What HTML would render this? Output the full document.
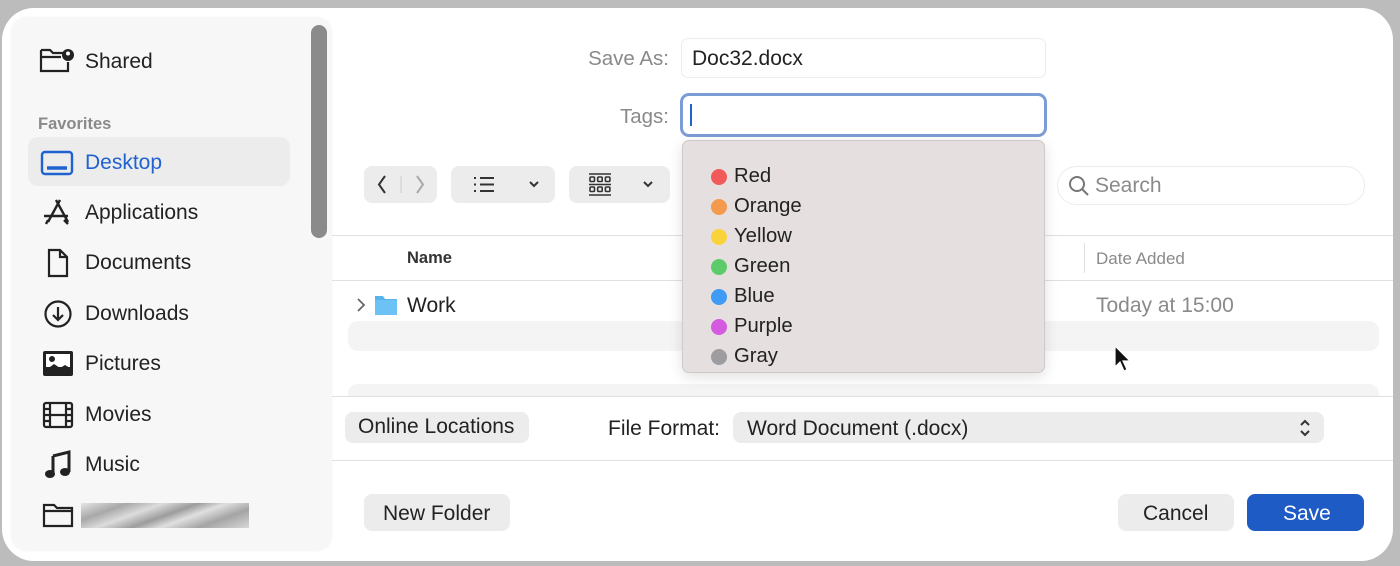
<!DOCTYPE html>
<html><head><meta charset="utf-8"><style>
*{margin:0;padding:0;box-sizing:border-box}
body{width:1400px;height:566px;overflow:hidden;background:#bcbcbc;font-family:"Liberation Sans",sans-serif;position:relative;color:#222}
.a{position:absolute}
.dlg{left:2px;top:8px;width:1391px;height:553px;background:#fff;border-radius:32px}
.side{left:12px;top:18px;width:319px;height:532px;background:#f7f7f7;border-radius:14px;box-shadow:0 0 3px rgba(0,0,0,.08)}
.si{font-size:21.5px;color:#222;left:85px}
.ic{left:40px}
.lbl{font-size:20.5px;color:#8a8a8a;text-align:right}
.btn{background:#ececec;border-radius:8px}
.t{font-size:21px;white-space:nowrap}
.d{font-size:20.3px}
.dot{width:16px;height:16px;border-radius:50%;left:711px}
.line{height:1px;background:#e0e0e0}
</style></head><body>
<div class="a dlg"></div>
<div class="a side"></div>
<div class="a" style="left:311px;top:25px;width:16px;height:213px;background:#8b8b8b;border-radius:8px"></div>
<div class="a" style="left:28px;top:137px;width:262px;height:49px;background:#ececec;border-radius:10px"></div>

<!-- sidebar icons -->
<svg class="a" style="left:38px;top:46px" width="40" height="30" viewBox="0 0 40 30" fill="none" stroke="#222" stroke-width="2.2"><path d="M3 4h9l3 3h10M3 4v21h27v-9M3 11h20"/><circle cx="30" cy="9" r="6" fill="#222" stroke="none"/><circle cx="30" cy="7.5" r="2" fill="#fff" stroke="none"/></svg>
<div class="a si t" style="top:50px">Shared</div>
<div class="a" style="left:38px;top:115px;font-size:16.5px;font-weight:bold;color:#8a8a8a">Favorites</div>
<svg class="a" style="left:40px;top:150px" width="34" height="26" viewBox="0 0 34 26" fill="none" stroke="#1f62d0" stroke-width="2.4"><rect x="2" y="2" width="30" height="22" rx="3"/><path d="M7 18h20" stroke-width="3.5"/></svg>
<div class="a si t" style="top:151px;color:#1f62d0">Desktop</div>
<svg class="a" style="left:42px;top:198px" width="32" height="28" viewBox="0 0 32 28" fill="none" stroke="#222" stroke-width="2.4"><path d="M14 2l12 22M18 2L6 24M2 18h24M22 22l4 4M4 26l2-4"/></svg>
<div class="a si t" style="top:201px">Applications</div>
<svg class="a" style="left:46px;top:248px" width="24" height="30" viewBox="0 0 24 30" fill="none" stroke="#222" stroke-width="2.2"><path d="M3 2h11l7 7v19H3zM14 2v7h7"/></svg>
<div class="a si t" style="top:251px">Documents</div>
<svg class="a" style="left:43px;top:299px" width="30" height="30" viewBox="0 0 30 30" fill="none" stroke="#222" stroke-width="2.2"><circle cx="15" cy="15" r="12.5"/><path d="M15 8v13M10 16l5 5 5-5"/></svg>
<div class="a si t" style="top:302px">Downloads</div>
<svg class="a" style="left:42px;top:350px" width="32" height="28" viewBox="0 0 32 28"><rect x="1" y="1" width="30" height="25" rx="2" fill="#222"/><rect x="4" y="4" width="24" height="13" fill="#fff"/><circle cx="10" cy="9" r="3" fill="#222"/><path d="M4 20l8-6 6 4 5-3 5 3v6H4z" fill="#222"/></svg>
<div class="a si t" style="top:352px">Pictures</div>
<svg class="a" style="left:42px;top:401px" width="32" height="28" viewBox="0 0 32 28" fill="none" stroke="#222" stroke-width="2.2"><rect x="2" y="2" width="28" height="24" rx="2"/><path d="M8 2v24M24 2v24M2 8h6M2 14h6M2 20h6M24 8h6M24 14h6M24 20h6M8 14h16"/></svg>
<div class="a si t" style="top:403px">Movies</div>
<svg class="a" style="left:44px;top:450px" width="28" height="30" viewBox="0 0 28 30"><path d="M9 6l16-4v20" fill="none" stroke="#222" stroke-width="3"/><path d="M9 6v18" stroke="#222" stroke-width="3"/><ellipse cx="6" cy="24" rx="5" ry="4" fill="#222"/><ellipse cx="21" cy="22" rx="5" ry="4" fill="#222"/></svg>
<div class="a si t" style="top:453px">Music</div>
<svg class="a" style="left:42px;top:502px" width="32" height="26" viewBox="0 0 32 26" fill="none" stroke="#222" stroke-width="2.2"><path d="M2 3h10l3 3h15v18H2zM2 9h28"/></svg>
<div class="a" style="left:81px;top:503px;width:168px;height:25px;background:linear-gradient(160deg,#e6e6e6,#a8a8a8 20%,#dcdcdc 35%,#9c9c9c 50%,#e0e0e0 62%,#a4a4a4 78%,#d8d8d8)"></div>

<!-- top fields -->
<div class="a lbl" style="left:540px;top:47px;width:129px">Save As:</div>
<div class="a" style="left:681px;top:38px;width:365px;height:40px;border:1px solid #ececec;border-radius:7px;background:#fff"></div>
<div class="a t" style="left:692px;top:47px">Doc32.docx</div>
<div class="a lbl" style="left:540px;top:105px;width:129px">Tags:</div>
<div class="a" style="left:680px;top:93px;width:367px;height:44px;border:3px solid #7c9cd6;border-radius:9px;background:#fff"></div>
<div class="a" style="left:690px;top:104px;width:2px;height:22px;background:#1f62d0"></div>

<!-- toolbar -->
<div class="a btn" style="left:364px;top:166px;width:73px;height:37px"></div>
<svg class="a" style="left:364px;top:166px" width="73" height="37" viewBox="0 0 73 37" fill="none" stroke-width="2"><path d="M21 10l-6 8.5 6 8.5" stroke="#333"/><path d="M37 10v17" stroke="#ccc" stroke-width="1"/><path d="M53 10l6 8.5-6 8.5" stroke="#aaa"/></svg>
<div class="a btn" style="left:451px;top:166px;width:104px;height:37px"></div>
<svg class="a" style="left:451px;top:166px" width="104" height="37" viewBox="0 0 104 37" fill="none" stroke="#333" stroke-width="2"><path d="M23 12h2M23 18.5h2M23 25h2M29 12h14M29 18.5h14M29 25h14M79 16l4 4 4-4"/></svg>
<div class="a btn" style="left:569px;top:166px;width:101px;height:37px"></div>
<svg class="a" style="left:569px;top:166px" width="101" height="37" viewBox="0 0 101 37" fill="none" stroke="#333" stroke-width="1.6"><path d="M20 8h22M20 18.5h22M20 29h22"/><rect x="21" y="11" width="4.5" height="4.5" rx="1"/><rect x="28.7" y="11" width="4.5" height="4.5" rx="1"/><rect x="36.4" y="11" width="4.5" height="4.5" rx="1"/><rect x="21" y="21" width="4.5" height="4.5" rx="1"/><rect x="28.7" y="21" width="4.5" height="4.5" rx="1"/><rect x="36.4" y="21" width="4.5" height="4.5" rx="1"/><path d="M75 16l4 4 4-4" stroke-width="2"/></svg>
<div class="a" style="left:1057px;top:166px;width:308px;height:39px;border:1px solid #ececec;border-radius:20px"></div>
<svg class="a" style="left:1068px;top:175px" width="22" height="22" viewBox="0 0 22 22" fill="none" stroke="#777" stroke-width="2"><circle cx="9" cy="9" r="7"/><path d="M14 14l6 6"/></svg>
<div class="a t" style="left:1095px;top:174px;color:#8a8a8a">Search</div>

<!-- browser -->
<div class="a line" style="left:332px;top:235px;width:1061px"></div>
<div class="a" style="left:407px;top:249px;font-size:16.5px;font-weight:bold;color:#333">Name</div>
<div class="a" style="left:1084px;top:243px;width:1px;height:30px;background:#e0e0e0"></div>
<div class="a" style="left:1096px;top:249px;font-size:17px;color:#8a8a8a">Date Added</div>
<div class="a line" style="left:332px;top:280px;width:1061px"></div>
<svg class="a" style="left:356px;top:297px" width="10" height="16" viewBox="0 0 10 16" fill="none" stroke="#666" stroke-width="1.8"><path d="M2 2l6 6-6 6"/></svg>
<svg class="a" style="left:374px;top:294px" width="24" height="22" viewBox="0 0 24 22"><path d="M1 2h8l2 3h12v16H1z" fill="#5ab4ec"/><rect x="1" y="6" width="22" height="15" rx="1" fill="#6cc2f4"/></svg>
<div class="a t" style="left:407px;top:294px">Work</div>
<div class="a t" style="left:1096px;top:294px;color:#8a8a8a">Today at 15:00</div>
<div class="a" style="left:348px;top:321px;width:1031px;height:30px;background:#f4f4f4;border-radius:10px"></div>
<div class="a" style="left:348px;top:384px;width:1031px;height:12px;background:#f4f4f4;border-radius:10px 10px 0 0"></div>
<div class="a line" style="left:332px;top:396px;width:1061px"></div>

<!-- cursor -->
<svg class="a" style="left:1113px;top:345px" width="18" height="28" viewBox="0 0 18 28"><path d="M2 1v21l5-5 4 9 3-1.5-4-8.5h7z" fill="#111" stroke="#fff" stroke-width="1.2"/></svg>

<!-- dropdown -->
<div class="a" style="left:682px;top:140px;width:363px;height:233px;background:#e5dfdf;border-radius:7px;border:1px solid #cfc9c9;box-shadow:0 4px 14px rgba(0,0,0,.12)"></div>
<div class="a dot" style="top:169px;background:#f25a5a"></div><div class="a t d" style="left:734px;top:165px">Red</div>
<div class="a dot" style="top:199px;background:#f59a4c"></div><div class="a t d" style="left:734px;top:195px">Orange</div>
<div class="a dot" style="top:229px;background:#fad33a"></div><div class="a t d" style="left:734px;top:225px">Yellow</div>
<div class="a dot" style="top:259px;background:#5ecb6a"></div><div class="a t d" style="left:734px;top:255px">Green</div>
<div class="a dot" style="top:289px;background:#3f9bf5"></div><div class="a t d" style="left:734px;top:285px">Blue</div>
<div class="a dot" style="top:319px;background:#d45ae0"></div><div class="a t d" style="left:734px;top:315px">Purple</div>
<div class="a dot" style="top:349px;background:#9d9ca0"></div><div class="a t d" style="left:734px;top:345px">Gray</div>

<!-- format row -->
<div class="a btn" style="left:345px;top:412px;width:184px;height:31px"></div>
<div class="a t" style="left:358px;top:415px">Online Locations</div>
<div class="a t" style="left:608px;top:417px">File Format:</div>
<div class="a btn" style="left:733px;top:412px;width:591px;height:31px"></div>
<div class="a t" style="left:747px;top:417px">Word Document (.docx)</div>
<svg class="a" style="left:1298px;top:418px" width="14" height="20" viewBox="0 0 14 20" fill="none" stroke="#333" stroke-width="2"><path d="M3 7l4-4 4 4M3 13l4 4 4-4"/></svg>
<div class="a line" style="left:332px;top:460px;width:1061px"></div>

<!-- bottom buttons -->
<div class="a btn" style="left:364px;top:494px;width:146px;height:37px"></div>
<div class="a t" style="left:383px;top:502px">New Folder</div>
<div class="a btn" style="left:1118px;top:494px;width:116px;height:37px"></div>
<div class="a t" style="left:1143px;top:502px">Cancel</div>
<div class="a" style="left:1247px;top:494px;width:117px;height:37px;background:#1f5bc4;border-radius:8px"></div>
<div class="a t" style="left:1283px;top:502px;color:#fff">Save</div>
</body></html>
